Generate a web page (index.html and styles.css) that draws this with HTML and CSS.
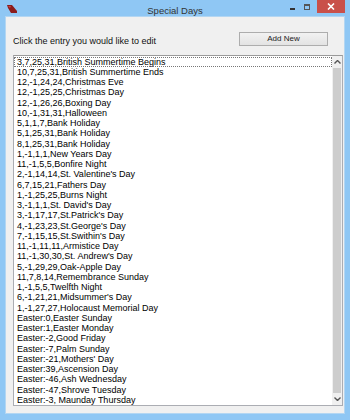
FILE: index.html
```html
<!DOCTYPE html>
<html lang="en">
<head>
    <meta charset="UTF-8">
    <title>Special Days</title>
    <link rel="stylesheet" href="styles.css">
</head>
<body>
    <div class="window">
        <div class="titlebar">
            <svg class="app-icon" width="10" height="8" viewBox="0 0 10 8">
                <polygon points="0,0 5,0 10,6 10,8 4,8 1,3" fill="#8b1c1c"/>
                <polygon points="1,1 4,1 3,3" fill="#c44"/>
            </svg>
            <div class="title">Special Days</div>
            <div class="controls">
                <span class="ctl-min"></span>
                <span class="ctl-max"></span>
                <span class="ctl-close">
                    <svg width="8" height="7" viewBox="0 0 8 7">
                        <path d="M1 0.5 L7 6.5 M7 0.5 L1 6.5" stroke="#fff" stroke-width="1.6"/>
                    </svg>
                </span>
            </div>
        </div>

        <div class="client">
            <div class="top-row">
                <span class="prompt">Click the entry you would like to edit</span>
                <button class="add-button">Add New</button>
            </div>

            <div class="listbox">
                <div class="items" id="items"></div>
                <div class="scrollbar">
                    <div class="arrow">
                        <svg width="7" height="4" viewBox="0 0 7 4"><path d="M0.5 3.5 L3.5 0.5 L6.5 3.5" stroke="#555" stroke-width="1.4" fill="none"/></svg>
                    </div>
                    <div class="thumb"></div>
                    <div class="arrow">
                        <svg width="7" height="4" viewBox="0 0 7 4"><path d="M0.5 0.5 L3.5 3.5 L6.5 0.5" stroke="#555" stroke-width="1.4" fill="none"/></svg>
                    </div>
                </div>
            </div>
        </div>
    </div>

    <script>
        const entries = [
            "3,7,25,31,British Summertime Begins",
            "10,7,25,31,British Summertime Ends",
            "12,-1,24,24,Christmas Eve",
            "12,-1,25,25,Christmas Day",
            "12,-1,26,26,Boxing Day",
            "10,-1,31,31,Halloween",
            "5,1,1,7,Bank Holiday",
            "5,1,25,31,Bank Holiday",
            "8,1,25,31,Bank Holiday",
            "1,-1,1,1,New Years Day",
            "11,-1,5,5,Bonfire Night",
            "2,-1,14,14,St. Valentine's Day",
            "6,7,15,21,Fathers Day",
            "1,-1,25,25,Burns Night",
            "3,-1,1,1,St. David's Day",
            "3,-1,17,17,St.Patrick's Day",
            "4,-1,23,23,St.George's Day",
            "7,-1,15,15,St.Swithin's Day",
            "11,-1,11,11,Armistice Day",
            "11,-1,30,30,St. Andrew's Day",
            "5,-1,29,29,Oak-Apple Day",
            "11,7,8,14,Remembrance Sunday",
            "1,-1,5,5,Twelfth Night",
            "6,-1,21,21,Midsummer's Day",
            "1,-1,27,27,Holocaust Memorial Day",
            "Easter:0,Easter Sunday",
            "Easter:1,Easter Monday",
            "Easter:-2,Good Friday",
            "Easter:-7,Palm Sunday",
            "Easter:-21,Mothers' Day",
            "Easter:39,Ascension Day",
            "Easter:-46,Ash Wednesday",
            "Easter:-47,Shrove Tuesday",
            "Easter:-3, Maunday Thursday"
        ];

        const list = document.getElementById('items');
        entries.forEach((text, i) => {
            const row = document.createElement('div');
            row.className = i === 0 ? 'item focused' : 'item';
            row.textContent = text;
            list.appendChild(row);
        });
    </script>
</body>
</html>
```

FILE: styles.css
```css
body {
    margin: 0;
    font-family: "Liberation Sans", Arial, sans-serif;
}
.window {
    width: 350px;
    height: 420px;
    background-color: #8fc7f4;
    display: flex;
    flex-direction: column;
}
.titlebar {
    height: 20px;
    display: flex;
    align-items: flex-start;
    position: relative;
}
.app-icon {
    margin: 5px 0 0 7px;
}
.title {
    position: absolute;
    left: 0;
    right: 0;
    top: 5px;
    text-align: center;
    font-size: 9.5px;
    color: #333;
}
.controls {
    margin-left: auto;
    margin-right: 5px;
    display: flex;
    align-items: flex-start;
}
.ctl-min {
    width: 5px;
    height: 2px;
    background-color: #333;
    margin: 8px 9px 0 0;
}
.ctl-max {
    width: 4px;
    height: 3px;
    border: 1px solid #555;
    border-top-width: 2px;
    margin: 4px 7px 0 0;
}
.ctl-close {
    width: 28px;
    height: 13px;
    background-color: #c9504a;
    display: flex;
    align-items: center;
    justify-content: center;
}
.client {
    flex: 1;
    margin: 0 5px 6px 5px;
    background-color: #f0f0f0;
    border: 1px solid #b3d6f2;
    padding: 15px 1px 7px 7px;
    display: flex;
    flex-direction: column;
}
.top-row {
    display: flex;
    align-items: flex-start;
    height: 23px;
}
.prompt {
    font-size: 9px;
    color: #111;
    margin-top: 4px;
}
.add-button {
    margin-left: auto;
    margin-right: 15px;
    width: 89px;
    height: 14px;
    padding: 0;
    font-family: "Liberation Sans", Arial, sans-serif;
    font-size: 8px;
    color: #222;
    background: linear-gradient(#f2f2f2, #e3e3e3);
    border: 1px solid #adadad;
    border-radius: 0;
}
.listbox {
    flex: 1;
    display: flex;
    background-color: #fff;
    border: 1px solid #abadb3;
    border-top-color: #9a9a9a;
    overflow: hidden;
}
.items {
    flex: 1;
    overflow: hidden;
    padding-top: 1px;
}
.item {
    font-size: 9px;
    line-height: 10.26px;
    height: 10.26px;
    padding-left: 3px;
    color: #000;
    white-space: nowrap;
    box-sizing: border-box;
}
.item.focused {
    outline: 1px dotted #777;
    outline-offset: -1px;
}
.scrollbar {
    width: 10px;
    display: flex;
    flex-direction: column;
    background-color: #f0f0f0;
}
.arrow {
    height: 12px;
    display: flex;
    align-items: center;
    justify-content: center;
}
.thumb {
    flex: 1;
    background-color: #cdcdcd;
    margin: 0 1px;
}
```
